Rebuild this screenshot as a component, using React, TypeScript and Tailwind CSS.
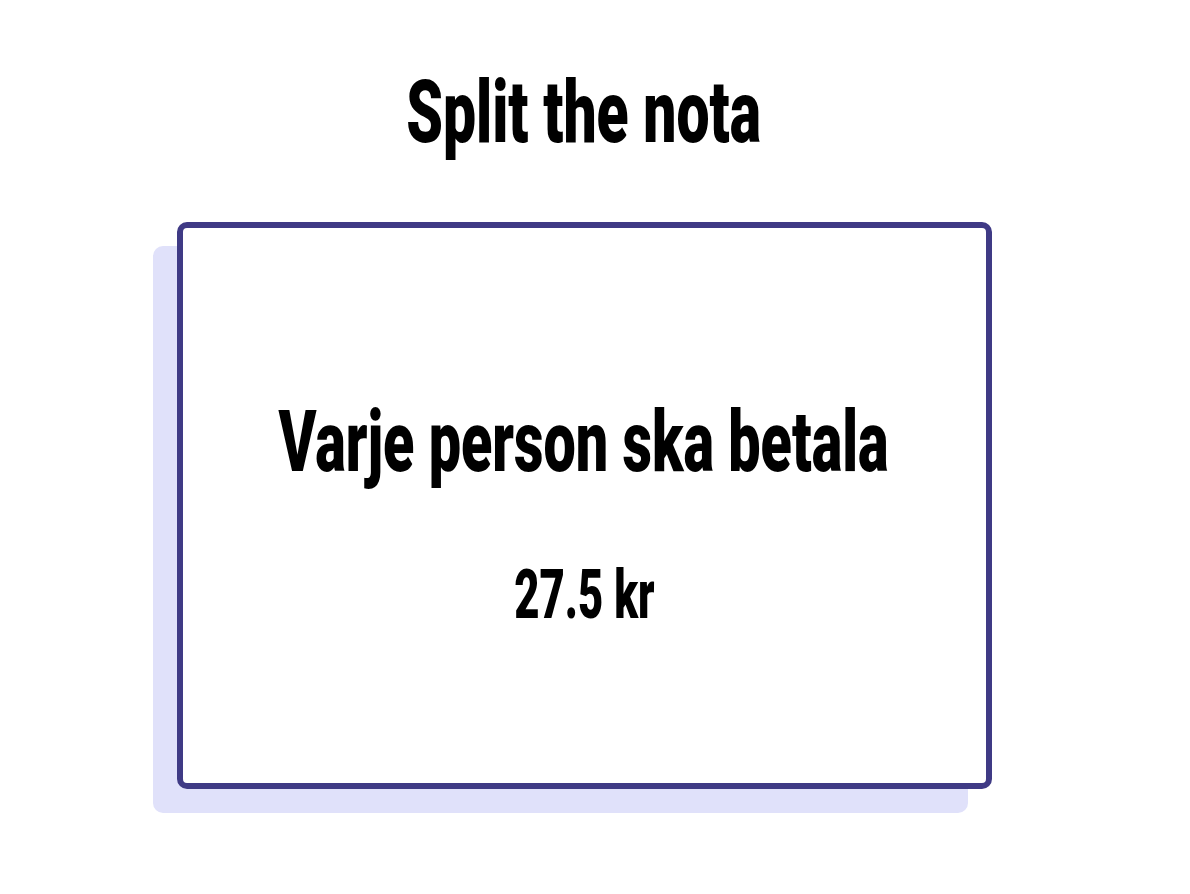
export default function App() {
  return (
    <div className="min-h-[894px] w-[1168px] bg-white flex flex-col items-center" style={{ fontFamily: 'Roboto, "Liberation Sans", sans-serif' }}>
      <h1 className="mt-[68px] text-[88px] leading-none font-black text-black scale-x-[0.668] whitespace-nowrap">
        Split the nota
      </h1>
      <div className="mt-[66px] w-[815px] h-[567px] border-[6px] border-[#3f3a85] rounded-[10px] bg-white shadow-[-24px_24px_0_0_#e0e1fa] flex flex-col items-center pt-[171px]">
        <p className="text-[86px] leading-none font-black text-black scale-x-[0.668] whitespace-nowrap">
          Varje person ska betala
        </p>
        <p className="mt-[76px] text-[68px] leading-none font-black text-black scale-x-[0.642] whitespace-nowrap">
          27.5 kr
        </p>
      </div>
    </div>
  );
}
